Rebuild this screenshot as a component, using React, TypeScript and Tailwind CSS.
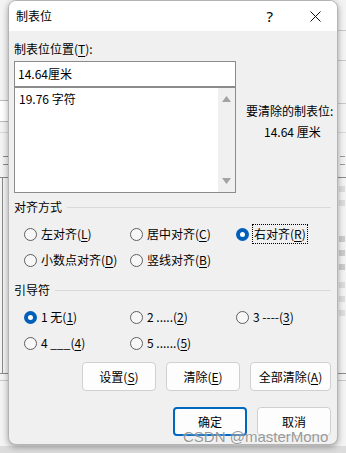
import React from "react";

const U = ({ children }: { children: React.ReactNode }) => (
  <span className="underline underline-offset-[2px]">{children}</span>
);

const Radio = ({
  checked,
  focus,
  children,
}: {
  checked?: boolean;
  focus?: boolean;
  children: React.ReactNode;
}) => (
  <div className="flex items-center h-[20px]">
    {checked ? (
      <span className="w-[13px] h-[13px] rounded-full bg-[#005fb8] flex items-center justify-center shrink-0">
        <span className="w-[5px] h-[5px] rounded-full bg-white" />
      </span>
    ) : (
      <span className="w-[13px] h-[13px] rounded-full border border-[#5f5f5f] bg-[#f7f7f7] shrink-0" />
    )}
    <span
      className={
        focus
          ? "ml-[3px] px-[1px] h-[20px] leading-[18px] border border-dotted border-black whitespace-nowrap"
          : "ml-[4px] whitespace-nowrap leading-[18px]"
      }
    >
      {children}
    </span>
  </div>
);

const Btn = ({
  w,
  primary,
  children,
}: {
  w: string;
  primary?: boolean;
  children: React.ReactNode;
}) => (
  <div
    className={
      (primary
        ? "border-[2px] border-[#0067c0] "
        : "border border-[#d0d0d0] ") +
      w +
      " h-[29px] rounded-[4px] bg-[#fdfdfd] flex items-center justify-center"
    }
  >
    {children}
  </div>
);

export default function App() {
  return (
    <div className="relative w-[346px] h-[453px] overflow-hidden bg-[#f3f3f3] font-['Microsoft_YaHei_UI','Noto_Sans_CJK_SC',sans-serif] text-[12px] text-black">
      {/* background document (behind the dialog) */}
      <div className="absolute left-0 top-0 w-[346px] h-[453px] text-[#333]">
        <div className="absolute left-[-1px] top-[100px] w-[12px] h-[22px] border border-[#bbb] bg-white" />
        <div className="absolute left-0 top-[132px] w-[346px] h-px bg-[#d8d8d8]" />
        <div className="absolute left-[3px] top-[156px] w-[5px] h-[9px] border-y border-[#888]" />
        <div className="absolute left-0 top-[177px] w-[346px] h-px bg-[#8a8a8a]" />
        <div className="absolute left-[2px] top-[177px] w-px h-[196px] bg-[#8a8a8a]" />
        <div className="absolute left-0 top-[373px] w-[346px] h-px bg-[#8a8a8a]" />
        <div className="absolute left-0 top-[380px] w-[346px] h-px bg-[#c8c8c8]" />
        <div className="absolute left-[338px] top-[30px] w-[8px] h-px bg-[#c8c8c8]" />
        <div className="absolute left-[338px] top-[60px] w-[8px] h-px bg-[#c8c8c8]" />
        <div className="absolute left-[338px] top-[103px] w-[8px] h-px bg-[#c8c8c8]" />
        <div className="absolute left-[340px] top-[156px] w-[5px] h-[9px] border-y border-[#999]" />
        <div className="absolute left-[339px] top-[186px] w-[6px] h-[6px] bg-[#ddd]" />
        <div className="absolute left-[339px] top-[200px] w-[6px] h-[6px] bg-[#ddd]" />
        <div className="absolute left-[339px] top-[236px] w-[6px] h-[6px] bg-[#ccc]" />
        <div className="absolute left-[339px] top-[250px] w-[6px] h-[6px] bg-[#ccc]" />
        <div className="absolute left-[339px] top-[264px] w-[6px] h-[6px] bg-[#ccc]" />
        <div className="absolute left-[339px] top-[282px] w-[6px] h-[6px] bg-[#ddd]" />
        <div className="absolute left-[339px] top-[296px] w-[6px] h-[6px] bg-[#ddd]" />
        <div className="absolute left-[339px] top-[310px] w-[6px] h-[6px] bg-[#ddd]" />
        <div className="absolute left-0 top-[446px] w-[346px] h-[7px] bg-[#dcdcdc]" />
      </div>

      {/* dialog */}
      <div className="relative ml-[8px] w-[330px] h-[445px] rounded-[8px] border border-[#b4b4b4] bg-[#f0f0f0] shadow-[0_2px_6px_rgba(0,0,0,0.35)] overflow-hidden flex flex-col">
        {/* title bar */}
        <div className="h-[30px] bg-white flex items-center shrink-0">
          <span className="ml-[7px] leading-[16px]">制表位</span>
          <span className="ml-auto mr-[37px] text-[15px] leading-[16px] font-['Segoe_UI','Noto_Sans',sans-serif]">?</span>
          <svg width="11" height="11" viewBox="0 0 11 11" className="mr-[16px]">
            <path d="M0.5 0.5 L10.5 10.5 M10.5 0.5 L0.5 10.5" stroke="#111" strokeWidth="1" />
          </svg>
        </div>

        {/* body */}
        <div className="flex flex-col px-[5px] pt-[10px]">
          <div className="leading-[16px]">
            制表位位置(<U>T</U>):
          </div>
          <div className="flex mt-[4px]">
            <div className="w-[222px] flex flex-col shrink-0">
              <div className="h-[26px] border border-[#8c8c8c] bg-white flex items-center pl-[3px]">
                14.64厘米
              </div>
              <div className="h-[106px] border border-[#8c8c8c] bg-white flex">
                <div className="flex-1 pl-[4px] pt-[3px] leading-[16px]">19.76 字符</div>
                <div className="w-[17px] bg-[#f0f0f0] flex flex-col items-center justify-between py-[8px]">
                  <svg width="9" height="6" viewBox="0 0 9 6">
                    <path d="M4.5 0 L9 6 L0 6 Z" fill="#a3a3a3" />
                  </svg>
                  <svg width="9" height="6" viewBox="0 0 9 6">
                    <path d="M0 0 L9 0 L4.5 6 Z" fill="#a3a3a3" />
                  </svg>
                </div>
              </div>
            </div>
            <div className="ml-[10px] pt-[42px] flex flex-col">
              <div className="whitespace-nowrap leading-[16px]">要清除的制表位:</div>
              <div className="mt-[5px] pl-[18px] whitespace-nowrap leading-[16px]">14.64 厘米</div>
            </div>
          </div>

          {/* 对齐方式 */}
          <div className="flex items-center mt-[6px] mr-[1px]">
            <span className="leading-[16px]">对齐方式</span>
            <div className="flex-1 h-px bg-[#d9d9d9] ml-[5px]" />
          </div>
          <div className="grid grid-cols-[106px_106px_auto] pl-[10px] mt-[9px] gap-y-[6px]">
            <Radio>
              左对齐(<U>L</U>)
            </Radio>
            <Radio>
              居中对齐(<U>C</U>)
            </Radio>
            <Radio checked focus>
              右对齐(<U>R</U>)
            </Radio>
            <Radio>
              小数点对齐(<U>D</U>)
            </Radio>
            <Radio>
              竖线对齐(<U>B</U>)
            </Radio>
          </div>

          {/* 引导符 */}
          <div className="flex items-center mt-[12px] mr-[1px]">
            <span className="leading-[16px]">引导符</span>
            <div className="flex-1 h-px bg-[#d9d9d9] ml-[5px]" />
          </div>
          <div className="grid grid-cols-[106px_106px_auto] pl-[10px] mt-[9px] gap-y-[6px]">
            <Radio checked>
              1 无(<U>1</U>)
            </Radio>
            <Radio>
              2 .....(<U>2</U>)
            </Radio>
            <Radio>
              3 ----(<U>3</U>)
            </Radio>
            <Radio>
              4 ___(<U>4</U>)
            </Radio>
            <Radio>
              5 ......(<U>5</U>)
            </Radio>
          </div>

          {/* action buttons */}
          <div className="flex justify-end gap-[10px] mt-[9px] mr-[1px]">
            <Btn w="w-[74px]">
              设置(<U>S</U>)
            </Btn>
            <Btn w="w-[74px]">
              清除(<U>E</U>)
            </Btn>
            <Btn w="w-[81px]">
              全部清除(<U>A</U>)
            </Btn>
          </div>
          <div className="flex justify-end gap-[10px] mt-[16px] mr-[1px]">
            <Btn w="w-[74px]" primary>
              确定
            </Btn>
            <Btn w="w-[74px]">取消</Btn>
          </div>
        </div>
      </div>

      {/* watermark */}
      <div className="absolute left-[183px] top-[428px] text-[15px] leading-[18px] font-['Liberation_Sans',sans-serif] text-[rgba(120,120,120,0.75)] whitespace-nowrap [text-shadow:0_0_2px_rgba(255,255,255,0.9)]">
        CSDN @masterMono
      </div>
    </div>
  );
}
